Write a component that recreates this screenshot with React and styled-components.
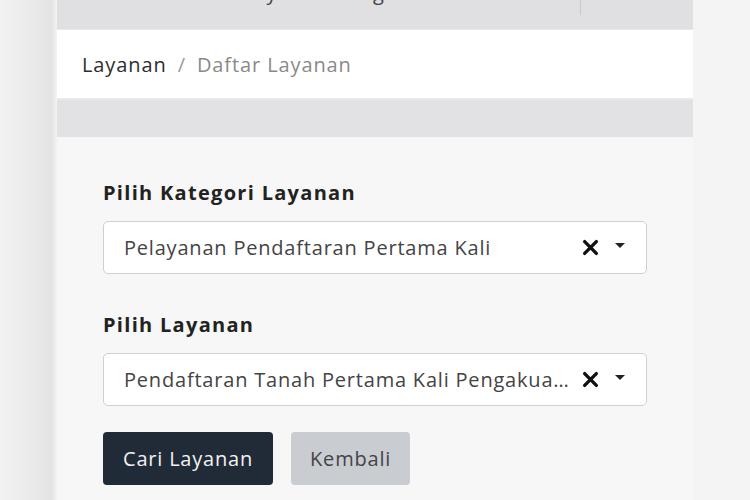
import React from 'react'
import styled, { createGlobalStyle } from 'styled-components'

const Global = createGlobalStyle`
  html, body {
    margin: 0;
    padding: 0;
    height: 100%;
  }
  body {
    font-family: 'Open Sans', 'Noto Sans', sans-serif;
    background: #f4f4f4;
    overflow: hidden;
  }
`

const Page = styled.div`
  width: 750px;
  height: 500px;
  display: flex;
  background: linear-gradient(
    90deg,
    #f2f2f2 0px,
    #ebebeb 30px,
    #e3e3e3 52px,
    #f4f4f4 57px
  );
`

const Column = styled.div`
  margin-left: 57px;
  width: 636px;
  display: flex;
  flex-direction: column;
  background: #f7f7f7;
`

const TopBar = styled.div`
  height: 29px;
  background: #e0e0e2;
  border-bottom: 1px solid #e8e8ea;
  display: flex;
  align-items: flex-start;
  overflow: hidden;
`

const TopTitle = styled.div`
  margin-left: 186px;
  margin-top: -17px;
  font-size: 20px;
  line-height: 20px;
  color: #444;
  letter-spacing: 1px;
`

const TopDivider = styled.div`
  margin-left: auto;
  margin-right: 112px;
  width: 1px;
  height: 15px;
  background: #c9c9cc;
`

const Breadcrumb = styled.div`
  height: 68px;
  background: #fff;
  display: flex;
  align-items: center;
  padding-left: 25px;
  font-size: 20px;
  letter-spacing: 0.9px;
`

const Crumb = styled.span`
  color: ${(p) => (p.muted ? '#8a8a8a' : '#2e2e2e')};
`

const Sep = styled.span`
  color: #999;
  margin: 0 11px;
`

const Band = styled.div`
  height: 37px;
  background: #e2e2e4;
  border-top: 2px solid #e9e9eb;
`

const Form = styled.div`
  padding: 43px 46px 0 46px;
  display: flex;
  flex-direction: column;
`

const Label = styled.div`
  font-size: 20px;
  line-height: 26px;
  font-weight: 700;
  color: #222;
  margin-bottom: 15px;
  letter-spacing: 1.3px;
`

const Select = styled.div`
  height: 53px;
  box-sizing: border-box;
  border: 1px solid #cfcfcf;
  border-radius: 5px;
  background: #fff;
  display: flex;
  align-items: center;
  padding: 0 21px 0 20px;
  margin-bottom: ${(p) => p.gap || 0}px;
`

const Value = styled.span`
  flex: 1;
  min-width: 0;
  font-size: 20px;
  letter-spacing: 0.8px;
  color: #444;
  white-space: nowrap;
  overflow: hidden;
  text-overflow: ellipsis;
`

const Clear = styled.span`
  margin-left: 11px;
  display: flex;
  align-items: center;
`

const Caret = styled.span`
  margin-left: 16px;
  width: 0;
  height: 0;
  border-left: 5px solid transparent;
  border-right: 5px solid transparent;
  border-top: 5px solid #222;
  margin-top: -4px;
`

const Actions = styled.div`
  display: flex;
  gap: 18px;
`

const Button = styled.button`
  height: 53px;
  border: none;
  border-radius: 4px;
  font-family: inherit;
  font-size: 20px;
  letter-spacing: 0.8px;
  padding: 0 ${(p) => (p.primary ? 20 : 19)}px;
  background: ${(p) => (p.primary ? '#212a37' : '#c9ccd1')};
  color: ${(p) => (p.primary ? '#f2f2f2' : '#444')};
`

const XIcon = () => (
  <svg width="17" height="17" viewBox="0 0 16 16">
    <path d="M2.5 2.5 L13.5 13.5 M13.5 2.5 L2.5 13.5" stroke="#111" strokeWidth="3.2" strokeLinecap="round" />
  </svg>
)

const Field = ({ label, value, gap }) => (
  <>
    <Label>{label}</Label>
    <Select gap={gap}>
      <Value>{value}</Value>
      <Clear>
        <XIcon />
      </Clear>
      <Caret />
    </Select>
  </>
)

export default function App() {
  return (
    <Page>
      <Global />
      <Column>
        <TopBar>
          <TopTitle>Layanan Pengaduan</TopTitle>
          <TopDivider />
        </TopBar>
        <Breadcrumb>
          <Crumb>Layanan</Crumb>
          <Sep>/</Sep>
          <Crumb muted>Daftar Layanan</Crumb>
        </Breadcrumb>
        <Band />
        <Form>
          <Field
            label="Pilih Kategori Layanan"
            value="Pelayanan Pendaftaran Pertama Kali"
            gap={38}
          />
          <Field
            label="Pilih Layanan"
            value="Pendaftaran Tanah Pertama Kali Pengakuan Hak"
            gap={26}
          />
          <Actions>
            <Button primary>Cari Layanan</Button>
            <Button>Kembali</Button>
          </Actions>
        </Form>
      </Column>
    </Page>
  )
}
